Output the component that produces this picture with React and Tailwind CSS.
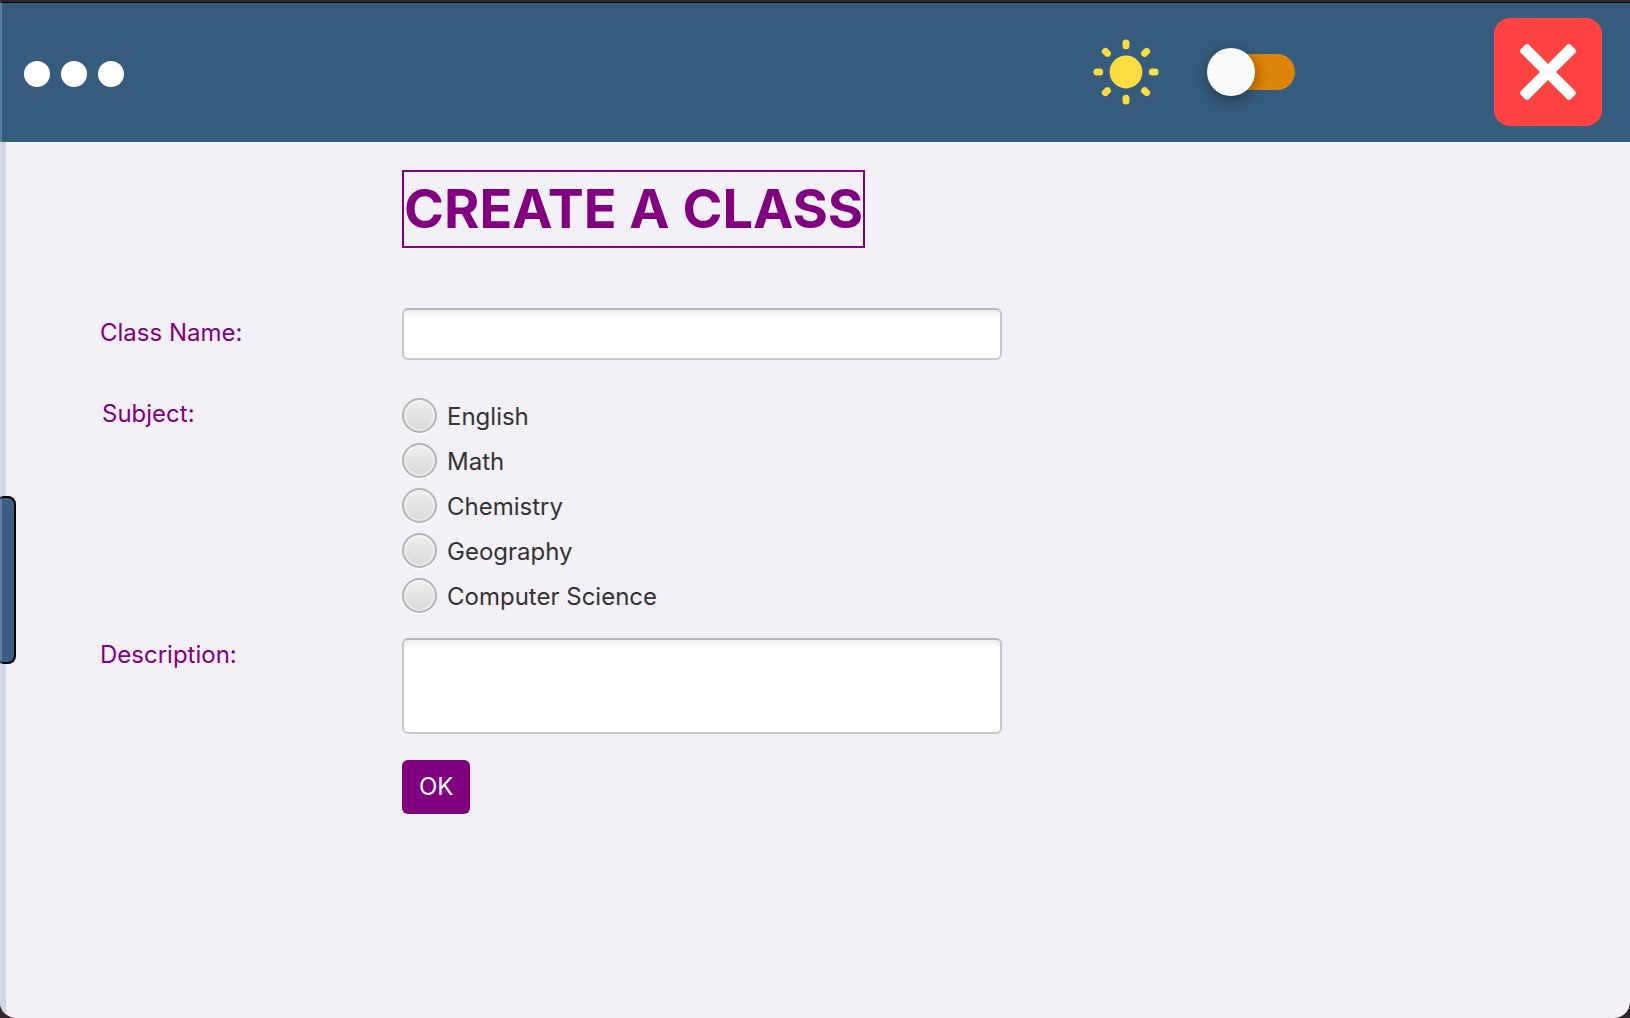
const subjects = ["English", "Math", "Chemistry", "Geography", "Computer Science"];

const labelClass = "text-2xl leading-8 text-[#800080]";
const fieldClass =
  "block w-full rounded-md border-2 border-[#c8c8cb] border-t-[#b7b7ba] bg-white bg-linear-to-b from-[#ededed] to-white to-[8px] px-3 text-2xl text-[#333333] outline-none";

function SunIcon() {
  return (
    <svg viewBox="0 0 66 66" className="size-[66px]" aria-hidden="true">
      <circle cx="33" cy="33" r="16.4" fill="#fbdc42" />
      <g stroke="#fbdc42" strokeWidth="7" strokeLinecap="round">
        <path d="M33 3.9v2.8M33 59.3v2.8M3.9 33h2.8M59.3 33h2.8" />
        <path d="M12.4 12.4l2 2M51.6 51.6l2 2M53.6 12.4l-2 2M14.4 51.6l-2 2" />
      </g>
    </svg>
  );
}

function CloseIcon() {
  return (
    <svg viewBox="0 0 56 56" className="size-14" aria-hidden="true">
      <g fill="#ffffff">
        <rect x="-5.7" y="-35.3" width="11.4" height="70.6" rx="2.8" transform="translate(28 28) rotate(45)" />
        <rect x="-5.7" y="-35.3" width="11.4" height="70.6" rx="2.8" transform="translate(28 28) rotate(-45)" />
      </g>
    </svg>
  );
}

function Header() {
  return (
    <header className="flex items-center border-t border-black bg-[#355c7d] pt-[15px] pr-7 pb-4 pl-6">
      <button type="button" aria-label="Menu" className="flex gap-[11px] pt-1">
        <span className="size-[26px] rounded-full bg-white" />
        <span className="size-[26px] rounded-full bg-white" />
        <span className="size-[26px] rounded-full bg-white" />
      </button>
      <div className="ml-auto flex items-center gap-12">
        <SunIcon />
        <input
          type="checkbox"
          role="switch"
          aria-label="Dark mode"
          className="flex h-9 w-[88px] appearance-none items-center rounded-full bg-linear-to-r from-transparent from-[20px] to-[#dc8407] to-[20px] before:size-12 before:shrink-0 before:rounded-full before:bg-[#fafafa] before:shadow-[0_4px_14px_rgba(0,0,0,0.4)]"
        />
      </div>
      <button
        type="button"
        aria-label="Close"
        className="ml-[199px] flex size-[108px] items-center justify-center rounded-2xl bg-[#ff4242]"
      >
        <CloseIcon />
      </button>
    </header>
  );
}

function ClassForm() {
  return (
    <form className="grid grow grid-cols-[302px_minmax(0,600px)] content-start pt-7 pr-7 pl-[94px]">
      <h1 className="col-start-2 mb-15 w-fit border-2 border-[#800080] text-[54px] leading-[74px] font-bold whitespace-nowrap text-[#800080]">
        CREATE A CLASS
      </h1>

      <label htmlFor="class-name" className={`${labelClass} col-start-1 pt-[9px]`}>
        Class Name:
      </label>
      <input id="class-name" type="text" className={`${fieldClass} h-[52px]`} />

      <span id="subject-label" className={`${labelClass} mt-[38px] pl-[2px]`}>
        Subject:
      </span>
      <div role="radiogroup" aria-labelledby="subject-label" className="mt-[38px] flex flex-col items-start gap-[10px]">
        {subjects.map((subject) => (
          <label key={subject} className="flex h-[35px] items-center gap-[10px] text-2xl text-[#333333]">
            <input
              type="radio"
              name="subject"
              value={subject}
              className="size-[35px] appearance-none rounded-full border-2 border-[#b5b5b5] bg-linear-to-b from-[#efefef] to-[#d9d9d9] shadow-[0_2px_0_#fafafc,inset_0_0_0_2px_rgba(255,255,255,0.4)] checked:border-[#800080]"
            />
            <span className="pt-[2px]">{subject}</span>
          </label>
        ))}
      </div>

      <label htmlFor="description" className={`${labelClass} mt-[26px]`}>
        Description:
      </label>
      <textarea id="description" className={`${fieldClass} mt-[25px] h-24 resize-none`} />

      <button
        type="button"
        className="col-start-2 mt-[26px] h-[54px] w-fit rounded-md bg-[#800080] px-[17px] text-2xl text-white"
      >
        OK
      </button>
    </form>
  );
}

export default function App() {
  return (
    <div className="min-h-screen bg-[#30262b] font-['Inter','Liberation_Sans',sans-serif]">
      <div className="relative flex min-h-screen flex-col overflow-hidden rounded-b-2xl border-t-2 border-[#30262b] bg-[#f3f0f8]">
        <Header />
        <main className="flex grow">
          <div className="relative flex w-[6px] shrink-0 items-center bg-[#cfd7e1]">
            <button
              type="button"
              aria-label="Open side panel"
              className="-ml-1 h-[168px] w-5 shrink-0 rounded-lg border-2 border-black bg-[#3b5f84]"
            />
          </div>
          <ClassForm />
        </main>
        <div className="pointer-events-none absolute inset-y-0 left-0 w-[2px] bg-[#d8e0e8]/25" />
      </div>
    </div>
  );
}
